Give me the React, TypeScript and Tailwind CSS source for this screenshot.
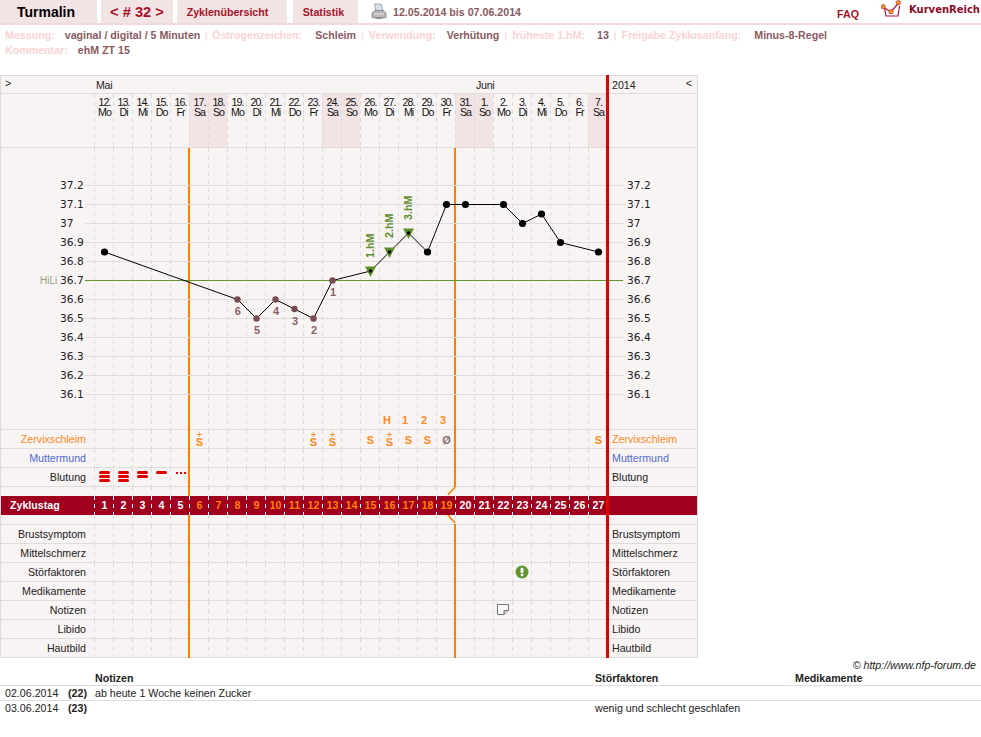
import type { ReactNode } from "react";

const DAYS = [
  "12.", "13.", "14.", "15.", "16.", "17.", "18.", "19.", "20.", "21.", "22.", "23.", "24.", "25.",
  "26.", "27.", "28.", "29.", "30.", "31.", "1.", "2.", "3.", "4.", "5.", "6.", "7.",
];
const WEEK = ["Mo", "Di", "Mi", "Do", "Fr", "Sa", "So"];
const COLS = DAYS.map((_, i) => i);

const DASH = "bg-[linear-gradient(#dedada_50%,transparent_50%)] bg-[length:1px_8px] bg-repeat-y";
const DASH_WHITE = "bg-[linear-gradient(#ffffff_50%,transparent_50%)] bg-[length:1px_8px] bg-repeat-y";

const TEMP_LABELS = [37.2, 37.1, 37, 36.9, 36.8, 36.7, 36.6, 36.5, 36.4, 36.3, 36.2, 36.1];

const tempY = (t: number) => 185.5 + (37.2 - t) * 190;
const colX = (i: number) => 104.5 + 19 * i;

// column index, temperature, kind of marker
const POINTS: [number, number, "black" | "low" | "high"][] = [
  [0, 36.85, "black"],
  [7, 36.6, "low"],
  [8, 36.5, "low"],
  [9, 36.6, "low"],
  [10, 36.55, "low"],
  [11, 36.5, "low"],
  [12, 36.7, "low"],
  [14, 36.75, "high"],
  [15, 36.85, "high"],
  [16, 36.95, "high"],
  [17, 36.85, "black"],
  [18, 37.1, "black"],
  [19, 37.1, "black"],
  [21, 37.1, "black"],
  [22, 37, "black"],
  [23, 37.05, "black"],
  [24, 36.9, "black"],
  [26, 36.85, "black"],
];

const LOW_NUMBERS: [number, number, string][] = [
  [237.7, 315, "6"],
  [257, 334, "5"],
  [276, 315, "4"],
  [295, 325, "3"],
  [314, 334, "2"],
  [333, 296, "1"],
];

const HIGH_LABELS: [number, number, string][] = [
  [370, 258, "1.hM"],
  [389, 238, "2.hM"],
  [408, 220, "3.hM"],
];

function TempChart() {
  return (
    <svg viewBox="1 148 696 281" className="relative z-10 block h-[281px] w-[696px] font-['Liberation_Sans',Arial,sans-serif]">
      {COLS.filter((i) => i !== 5 && i !== 19).map((i) => (
        <line key={i} x1={94.5 + 19 * i} x2={94.5 + 19 * i} y1={148} y2={429} stroke="#dedada" strokeDasharray="4 4" />
      ))}
      {TEMP_LABELS.map((t) => (
        <g key={t}>
          <line x1={85} x2={606} y1={tempY(t)} y2={tempY(t)} stroke="#e0dcdc" />
          <line x1={609} x2={623} y1={tempY(t)} y2={tempY(t)} stroke="#e0dcdc" />
          <text x={60} y={tempY(t) + 3.5} fill="#222" fontSize="10.67" className="font-['DejaVu_Sans',sans-serif]">{t}</text>
          <text x={627} y={tempY(t) + 3.5} fill="#222" fontSize="10.67" className="font-['DejaVu_Sans',sans-serif]">{t}</text>
        </g>
      ))}
      <line x1={85} x2={623} y1={280.5} y2={280.5} stroke="#5f9630" />
      <text x={40} y={284} fill="#93a27c" fontSize="10">HiLi</text>

      <polyline
        points={POINTS.map(([i, t]) => `${colX(i)},${tempY(t)}`).join(" ")}
        fill="none"
        stroke="#000"
      />
      {POINTS.map(([i, t, kind]) => {
        const x = colX(i);
        const y = tempY(t);
        if (kind === "high") {
          return (
            <g key={i}>
              <polygon points={`${x - 5.5},${y - 4.5} ${x + 5.5},${y - 4.5} ${x},${y + 6}`} fill="#5c8f2a" />
              <circle cx={x} cy={y} r={1.8} fill="#000" />
            </g>
          );
        }
        return <circle key={i} cx={x} cy={y} r={kind === "low" ? 3.2 : 3.6} fill={kind === "low" ? "#7a4c52" : "#000"} />;
      })}
      {LOW_NUMBERS.map(([x, y, n]) => (
        <text key={n} x={x} y={y} textAnchor="middle" fill="#8a5f66" fontSize="11" fontWeight="700">{n}</text>
      ))}
      {HIGH_LABELS.map(([x, y, label]) => (
        <text key={label} x={x + 4} y={y} transform={`rotate(-90 ${x + 4} ${y})`} fill="#5c8f2a" fontSize="10.67" fontWeight="700">
          {label}
        </text>
      ))}
      {[[387, "H"], [405, "1"], [424, "2"], [443, "3"]].map(([x, s]) => (
        <text key={s} x={x} y={424} textAnchor="middle" fill="#ff8a1e" fontSize="11" fontWeight="700">{s}</text>
      ))}
    </svg>
  );
}

function Mucus({ plus, dry }: { plus?: boolean; dry?: boolean }) {
  const color = dry ? "text-[#8a6f72]" : "text-[#ff8a1e]";
  if (plus) {
    return (
      <div className={`flex flex-col items-center font-bold ${color}`}>
        <span className="h-[6px] text-[10px] font-normal leading-[6px]">+</span>
        <span className="h-[9px] text-[11px] leading-[9px]">S</span>
      </div>
    );
  }
  return <span className={`relative top-[1px] text-[11px] font-bold leading-[9px] ${color}`}>{dry ? "Ø" : "S"}</span>;
}

function Bleeding({ bars }: { bars: number }) {
  return (
    <div className="flex h-full flex-col items-center gap-[1px] pt-[3px]">
      {Array.from({ length: bars }).map((_, i) => (
        <div key={i} className="h-[3px] w-[11px] rounded-full bg-[#e00000]" />
      ))}
    </div>
  );
}

function Spotting() {
  return (
    <div className="flex h-full items-start justify-center gap-[2px] pt-[4px]">
      <div className="h-[2px] w-[2px] bg-[#e00000]" />
      <div className="h-[2px] w-[2px] bg-[#e00000]" />
      <div className="h-[2px] w-[2px] bg-[#e00000]" />
    </div>
  );
}

function AlertIcon() {
  return (
    <svg viewBox="0 0 14 14" className="relative left-[-1px] h-[14px] w-[14px]">
      <circle cx="7" cy="7" r="6.5" fill="#5f9630" />
      <rect x="5.5" y="2.8" width="3" height="5.2" rx="1.2" fill="#fff" />
      <circle cx="7" cy="10" r="1.4" fill="#fff" />
    </svg>
  );
}

function NoteIcon() {
  return (
    <svg viewBox="0 0 12 11" className="relative left-[-1px] top-[-1px] h-[11px] w-[12px]">
      <path d="M0.5 0.5 H11.5 V6.5 L7 10.5 H0.5 Z" fill="#fbf8f8" stroke="#777" />
      <path d="M7 10.5 V6.5 H11.5" fill="#cfcfcf" stroke="#777" />
    </svg>
  );
}

function PrinterIcon() {
  return (
    <svg viewBox="0 0 16 18" className="h-[18px] w-[16px]">
      <path d="M3.5 1 H10 L12 8 H5 Z" fill="#d8e0ea" stroke="#8a97a8" strokeWidth="0.8" />
      <path d="M1 10 L4 7.5 H12 L15 10 V14.5 H1 Z" fill="#b8b8b8" stroke="#808080" strokeWidth="0.8" />
      <path d="M2 14.5 Q8 18 14 14.5 Z" fill="#909090" />
      <rect x="3" y="10.5" width="10" height="1" fill="#e8e8e8" />
    </svg>
  );
}

function LogoIcon() {
  return (
    <svg viewBox="0 0 23 20" className="h-[20px] w-[23px]">
      <path d="M3.5 8 L5 16 H17 L18.5 6" fill="none" stroke="#b0183a" strokeWidth="1.2" />
      <path d="M2 7 L10 12 L17.5 3" fill="none" stroke="#b0183a" strokeWidth="1.2" />
      <circle cx="2.2" cy="6.7" r="2.2" fill="#f59a1e" stroke="#b0183a" strokeWidth="0.6" />
      <circle cx="10" cy="11.7" r="2.2" fill="#f59a1e" stroke="#b0183a" strokeWidth="0.6" />
      <circle cx="17.3" cy="2.7" r="2.2" fill="#f59a1e" stroke="#b0183a" strokeWidth="0.6" />
    </svg>
  );
}

function Row({
  label,
  labelClass = "text-[#222]",
  cells = {},
}: {
  label: string;
  labelClass?: string;
  cells?: Record<number, ReactNode>;
}) {
  return (
    <div className="flex h-[19px] border-b border-[#e0dcdc]">
      <div className={`w-[93px] pr-[8px] text-right leading-[19px] ${labelClass}`}>{label}</div>
      {COLS.map((i) => (
        <div key={i} className={`flex h-full w-[19px] items-center justify-center pl-[2px] ${DASH}`}>
          {cells[i]}
        </div>
      ))}
      <div className={`flex-1 pl-[5px] leading-[19px] ${labelClass}`}>{label}</div>
    </div>
  );
}

function Spacer({ height, border }: { height: string; border?: boolean }) {
  return (
    <div className={`flex ${height} ${border ? "border-b border-[#e0dcdc]" : ""}`}>
      <div className="w-[93px]" />
      {COLS.map((i) => (
        <div key={i} className={`h-full w-[19px] ${DASH}`} />
      ))}
    </div>
  );
}

function Meta({ label, value, gap, sep }: { label: string; value: string; gap: string; sep?: string }) {
  return (
    <>
      {sep && <span className={`${sep} font-normal text-[#fbd3d3]`}>|</span>}
      <span className="text-[#fbd3d3]">{label}</span>
      <span className={`${gap} text-[#8a5a60]`}>{value}</span>
    </>
  );
}

export default function App() {
  return (
    <div className="min-h-[737px] w-[981px] bg-white font-['Liberation_Sans',Arial,sans-serif] text-[10.67px] leading-[12px]">
      <header className="flex h-[25px] border-b-2 border-[#f2d9dc]">
        <div className="flex w-[97px] items-center justify-center bg-[#f2e3e4] pr-[5px] text-[14px] font-bold text-black">Turmalin</div>
        <div className="ml-[4px] flex w-[72px] items-center justify-center bg-[#f2e3e4] text-[14.67px] font-bold text-[#a5142a]">&lt; # 32 &gt;</div>
        <div className="ml-[4px] flex w-[110px] items-center justify-center bg-[#f2e3e4] pr-[9px] font-bold text-[#a5142a]">Zyklenübersicht</div>
        <div className="ml-[6px] flex w-[65px] items-center justify-center bg-[#f2e3e4] pr-[4px] font-bold text-[#a5142a]">Statistik</div>
        <div className="ml-[13px] flex items-center">
          <PrinterIcon />
        </div>
        <div className="ml-[6px] pt-[6px] font-bold text-[#8a5a60]">12.05.2014 bis 07.06.2014</div>
        <div className="ml-auto pt-[8px] font-bold text-[#a5142a]">FAQ</div>
        <div className="ml-[22px] mr-[1px] flex">
          <LogoIcon />
          <span className="ml-[5px] pt-[4px] font-['DejaVu_Sans',sans-serif] text-[10px] font-bold text-[#8c0a28]">KurvenReich</span>
        </div>
      </header>

      <div className="h-[50px] px-[5px] pt-[3px] font-bold leading-[15px]">
        <div>
          <Meta gap="ml-[10px]" label="Messung:" value="vaginal / digital / 5 Minuten" />
          <Meta sep="mx-[4.5px]" gap="ml-[13px]" label="Östrogenzeichen:" value="Schleim" />
          <Meta sep="mx-[5px]" gap="ml-[11px]" label="Verwendung:" value="Verhütung" />
          <Meta sep="mx-[5px]" gap="ml-[12px]" label="früheste 1.hM:" value="13" />
          <Meta sep="mx-[5px]" gap="ml-[13px]" label="Freigabe Zyklusanfang:" value="Minus-8-Regel" />
        </div>
        <div>
          <Meta gap="ml-[10px]" label="Kommentar:" value="ehM ZT 15" />
        </div>
      </div>

      <div className="relative w-[698px] border-l border-r border-t border-[#dedada] bg-[#f9f4f4] text-[#222]">
        {/* cycle markers and end line, these lie over the rows */}
        <div className="absolute left-[187px] top-[72px] bottom-0 z-[1] w-[2px] bg-[#ff8000]" />
        <div className="absolute left-[453px] top-[72px] z-[1] h-[339px] w-[2px] bg-[#ff8000]" />
        <svg viewBox="0 0 12 38" className="absolute left-[445px] top-[410px] z-[1] h-[38px] w-[12px]">
          <path d="M9 1 L2 9 M2 29 L9 37" stroke="#ff8000" strokeWidth="1.5" fill="none" />
        </svg>
        <div className="absolute left-[453px] top-[448px] bottom-0 z-[1] w-[2px] bg-[#ff8000]" />
        <div className="absolute left-[605px] top-[-1px] bottom-0 z-20 w-[3px] bg-[#e60000]" />

        <div className="flex h-[18px] border-b border-[#e0dcdc] leading-[18px]">
          <div className="w-[93px] pl-[4px] leading-[14px]">&gt;</div>
          <div className="w-[380px] pl-[2px] tracking-[-0.3px]">Mai</div>
          <div className="w-[133px] pl-[2px] tracking-[-0.3px]">Juni</div>
          <div className="flex flex-1 justify-between pl-[5px] pr-[5px]">
            <span>2014</span>
            <span className="leading-[14px]">&lt;</span>
          </div>
        </div>

        <div className="flex h-[54px] border-b border-[#e0dcdc]">
          <div className="w-[93px]" />
          {DAYS.map((d, i) => {
            const weekday = WEEK[i % 7];
            const weekend = weekday === "Sa" || weekday === "So";
            return (
              <div
                key={i}
                className={`h-full w-[19px] pl-[2px] pt-[3px] text-center leading-[10px] tracking-[-1px] text-[#111] ${DASH} ${weekend ? "bg-[#f2e3e4]" : ""}`}
              >
                <div>{d}</div>
                <div>{weekday}</div>
              </div>
            );
          })}
        </div>

        <div className="h-[282px] border-b border-[#e0dcdc]">
          <TempChart />
        </div>

        <Row
          label="Zervixschleim"
          labelClass="text-[#ff8a1e]"
          cells={{
            5: <Mucus plus />,
            11: <Mucus plus />,
            12: <Mucus plus />,
            14: <Mucus />,
            15: <Mucus plus />,
            16: <Mucus />,
            17: <Mucus />,
            18: <Mucus dry />,
            26: <Mucus />,
          }}
        />
        <Row label="Muttermund" labelClass="text-[#4f6bd0]" />
        <Row
          label="Blutung"
          cells={{
            0: <Bleeding bars={3} />,
            1: <Bleeding bars={3} />,
            2: <Bleeding bars={2} />,
            3: <Bleeding bars={1} />,
            4: <Spotting />,
          }}
        />
        <Spacer height="h-[9px]" />

        <div className="relative z-[2] flex h-[19px] bg-[#a0001e] font-bold leading-[19px] text-white">
          <div className="w-[93px] pl-[9px]">Zyklustag</div>
          {COLS.map((i) => (
            <div key={i} className={`h-full w-[19px] pl-[2px] text-center ${DASH_WHITE} ${i >= 5 && i <= 18 ? "text-[#ff8000]" : ""}`}>
              {i + 1}
            </div>
          ))}
        </div>
        <Spacer height="h-[10px]" border />

        <Row label="Brustsymptom" />
        <Row label="Mittelschmerz" />
        <Row label="Störfaktoren" cells={{ 22: <AlertIcon /> }} />
        <Row label="Medikamente" />
        <Row label="Notizen" cells={{ 21: <NoteIcon /> }} />
        <Row label="Libido" />
        <Row label="Hautbild" />
      </div>

      <div className="h-[14px] pr-[5px] text-right italic leading-[14px] text-[#222]">© http://www.nfp-forum.de</div>

      <div className="text-[#222]">
        <div className="flex h-[14px] border-b border-[#e0dcdc] font-bold leading-[12px]">
          <div className="w-[95px]" />
          <div className="w-[500px]">Notizen</div>
          <div className="w-[200px]">Störfaktoren</div>
          <div>Medikamente</div>
        </div>
        <div className="flex h-[15px] border-b border-[#e0dcdc] leading-[14px]">
          <div className="w-[63px] pl-[5px]">02.06.2014</div>
          <div className="w-[32px] pl-[5px] font-bold">(22)</div>
          <div className="w-[500px]">ab heute 1 Woche keinen Zucker</div>
          <div className="w-[200px]" />
        </div>
        <div className="flex h-[15px] leading-[14px]">
          <div className="w-[63px] pl-[5px]">03.06.2014</div>
          <div className="w-[32px] pl-[5px] font-bold">(23)</div>
          <div className="w-[500px]" />
          <div className="w-[200px]">wenig und schlecht geschlafen</div>
        </div>
      </div>
    </div>
  );
}
